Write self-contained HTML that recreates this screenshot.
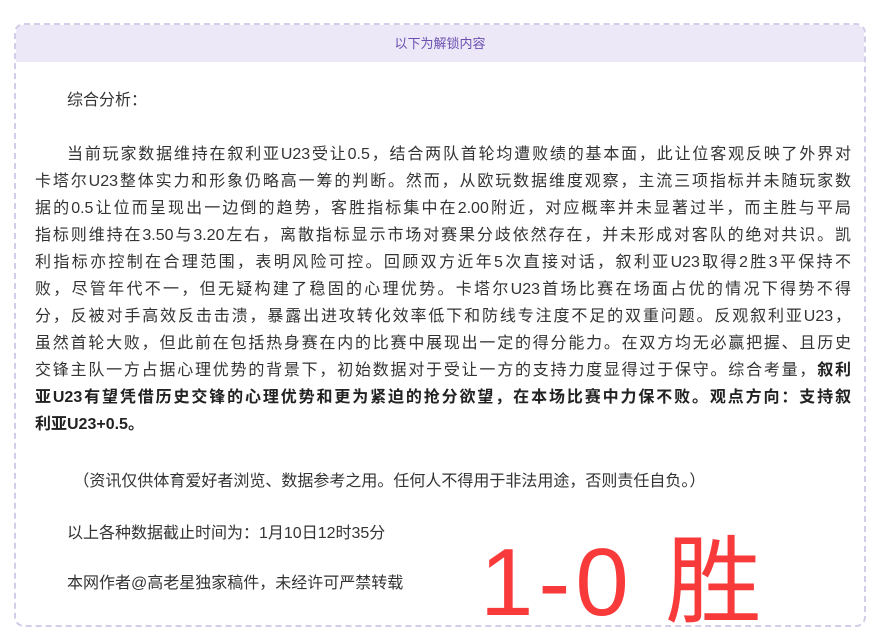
<!DOCTYPE html>
<html><head><meta charset="utf-8"><style>
html,body{margin:0;padding:0;background:#fff;width:880px;height:641px;overflow:hidden;}
body{font-family:"Liberation Sans","Noto Sans CJK SC",sans-serif;color:#333;position:relative;}
.box{position:absolute;left:14px;top:23px;width:848px;height:600px;border:2px dashed #d2cde8;border-radius:10px;overflow:hidden;}
.hd{height:37px;background:#ece8f8;color:#6a4fb0;font-size:13px;text-align:center;line-height:38px;}
p{position:absolute;margin:0;left:19px;width:816px;font-size:16px;line-height:27px;text-indent:2em;}
.j{text-indent:0;}
.j span{display:block;white-space:nowrap;text-align:justify;text-align-last:justify;}
.j span.f{padding-left:2em;}
.j span.l{text-align-last:left;}
b{font-weight:bold;color:#222;}
.big{position:absolute;left:480px;top:523px;font-size:96px;line-height:120px;color:#f83a3a;white-space:nowrap;letter-spacing:5px;}
</style></head><body>
<div class="box"><div class="hd">以下为解锁内容</div>
<p style="top:62px">综合分析：</p>
<p class="j" style="top:116px">
<span class="f">当前玩家数据维持在叙利亚U23受让0.5，结合两队首轮均遭败绩的基本面，此让位客观反映了外界对</span>
<span>卡塔尔U23整体实力和形象仍略高一筹的判断。然而，从欧玩数据维度观察，主流三项指标并未随玩家数</span>
<span>据的0.5让位而呈现出一边倒的趋势，客胜指标集中在2.00附近，对应概率并未显著过半，而主胜与平局</span>
<span>指标则维持在3.50与3.20左右，离散指标显示市场对赛果分歧依然存在，并未形成对客队的绝对共识。凯</span>
<span>利指标亦控制在合理范围，表明风险可控。回顾双方近年5次直接对话，叙利亚U23取得2胜3平保持不</span>
<span>败，尽管年代不一，但无疑构建了稳固的心理优势。卡塔尔U23首场比赛在场面占优的情况下得势不得</span>
<span>分，反被对手高效反击击溃，暴露出进攻转化效率低下和防线专注度不足的双重问题。反观叙利亚U23，</span>
<span>虽然首轮大败，但此前在包括热身赛在内的比赛中展现出一定的得分能力。在双方均无必赢把握、且历史</span>
<span>交锋主队一方占据心理优势的背景下，初始数据对于受让一方的支持力度显得过于保守。综合考量，<b>叙利</b></span>
<span><b>亚U23有望凭借历史交锋的心理优势和更为紧迫的抢分欲望，在本场比赛中力保不败。观点方向：支持叙</b></span>
<span class="l"><b>利亚U23+0.5。</b></span>
</p>
<p style="top:443px;text-indent:2.4em">（资讯仅供体育爱好者浏览、数据参考之用。任何人不得用于非法用途，否则责任自负。）</p>
<p style="top:495px">以上各种数据截止时间为：1月10日12时35分</p>
<p style="top:545px">本网作者@高老星独家稿件，未经许可严禁转载</p>
</div>
<div class="big">1-0 胜</div>
</body></html>
